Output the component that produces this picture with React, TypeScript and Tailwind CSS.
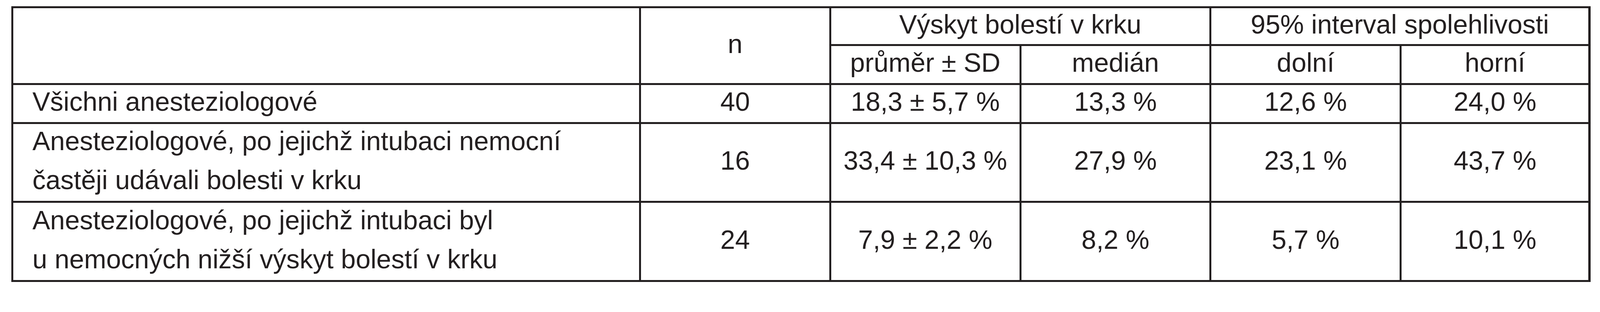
const line = "border-[#231f20]";

type Cell = {
  text: string[];
  className: string;
  left?: boolean;
};

const cells: Cell[] = [
  { text: [""], className: "row-span-2" },
  { text: ["n"], className: "row-span-2" },
  { text: ["Výskyt bolestí v krku"], className: "col-span-2" },
  { text: ["95% interval spolehlivosti"], className: "col-span-2 border-r-[6px]" },
  { text: ["průměr ± SD"], className: "" },
  { text: ["medián"], className: "" },
  { text: ["dolní"], className: "" },
  { text: ["horní"], className: "border-r-[6px]" },

  { text: ["Všichni anesteziologové"], className: "", left: true },
  { text: ["40"], className: "" },
  { text: ["18,3 ± 5,7 %"], className: "" },
  { text: ["13,3 %"], className: "" },
  { text: ["12,6 %"], className: "" },
  { text: ["24,0 %"], className: "border-r-[6px]" },

  {
    text: ["Anesteziologové, po jejichž intubaci nemocní", "častěji udávali bolesti v krku"],
    className: "",
    left: true,
  },
  { text: ["16"], className: "" },
  { text: ["33,4 ± 10,3 %"], className: "" },
  { text: ["27,9 %"], className: "" },
  { text: ["23,1 %"], className: "" },
  { text: ["43,7 %"], className: "border-r-[6px]" },

  {
    text: ["Anesteziologové, po jejichž intubaci byl", "u nemocných nižší výskyt bolestí v krku"],
    className: "",
    left: true,
  },
  { text: ["24"], className: "" },
  { text: ["7,9 ± 2,2 %"], className: "" },
  { text: ["8,2 %"], className: "" },
  { text: ["5,7 %"], className: "" },
  { text: ["10,1 %"], className: "border-r-[6px]" },
];

export default function App() {
  return (
    <div className="w-full overflow-hidden bg-white pt-[16px] pb-[30px] pl-[29px] pr-[24px]">
      <div
        className={`grid w-full grid-cols-[minmax(0,1702fr)_minmax(0,515fr)_minmax(0,516fr)_minmax(0,515fr)_minmax(0,516fr)_minmax(0,512fr)] grid-rows-[97px_100px_100px_202px_203px] border-t-[5px] border-l-[5px] ${line} text-[68px] leading-[100px] text-[#231f20]`}
        style={{ fontFamily: '"Liberation Sans", Arial, sans-serif' }}
      >
        {cells.map((c, i) => (
          <div
            key={i}
            className={`flex min-w-0 flex-col justify-center pb-[11px] border-r-[5px] border-b-[5px] ${line} ${
              c.left ? "items-start pl-[49px]" : "items-center"
            } ${c.className}`}
          >
            {c.text.map((t, j) => (
              <span key={j} className="whitespace-nowrap">
                {t}
              </span>
            ))}
          </div>
        ))}
      </div>
    </div>
  );
}
